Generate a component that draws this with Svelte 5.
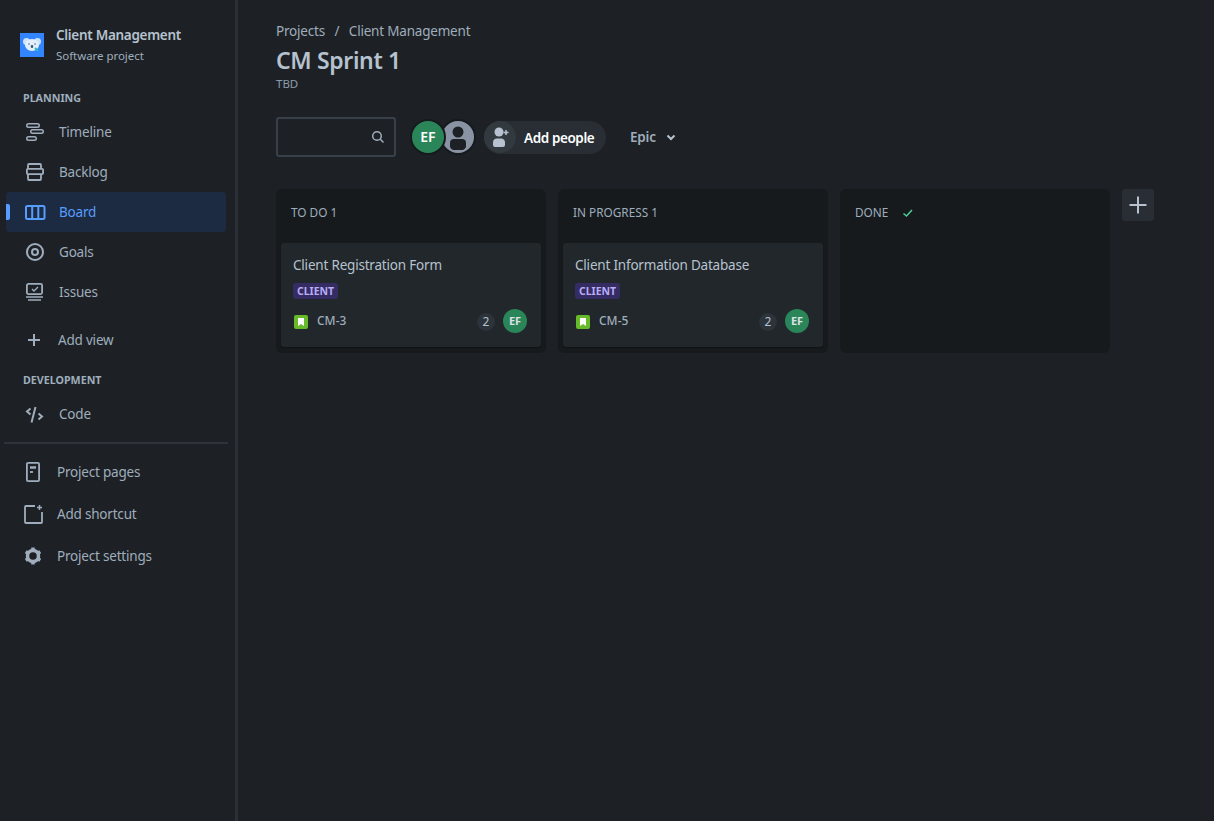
<script>
  const planning = [
    { id: "timeline", label: "Timeline" },
    { id: "backlog", label: "Backlog" },
    { id: "board", label: "Board", active: true },
    { id: "goals", label: "Goals" },
    { id: "issues", label: "Issues" },
  ];

  const columns = [
    { title: "TO DO 1", cards: [{ title: "Client Registration Form", key: "CM-3" }] },
    { title: "IN PROGRESS 1", cards: [{ title: "Client Information Database", key: "CM-5" }] },
    { title: "DONE", done: true, cards: [] },
  ];
</script>

{#snippet icon(id)}
  <svg class="icon" width="24" height="24" viewBox="0 0 24 24" fill="none" stroke="currentColor" stroke-width="2">
    {#if id === "timeline"}
      <rect x="3.750" y="3.750" width="12.500" height="3.500" rx="1.750" stroke-width="1.500" />
      <rect x="7.750" y="9.750" width="12.500" height="3.500" rx="1.750" stroke-width="1.500" />
      <rect x="3.750" y="16.750" width="9.500" height="3.500" rx="1.750" stroke-width="1.500" />
    {:else if id === "backlog"}
      <path d="M5 9V5a1 1 0 0 1 1-1h11a1 1 0 0 1 1 1v4" stroke-width="1.800" />
      <rect x="3.900" y="8.900" width="16.200" height="5.200" rx="1" stroke-width="1.800" />
      <path d="M5 14v5a1 1 0 0 0 1 1h11a1 1 0 0 0 1-1v-5" stroke-width="1.800" />
    {:else if id === "board"}
      <rect x="3" y="5.900" width="18.500" height="13.200" rx="1.500" />
      <path d="M9.200 5v14M15.300 5v14" />
    {:else if id === "goals"}
      <circle cx="12" cy="12" r="8" />
      <circle cx="12" cy="12" r="3" />
    {:else if id === "issues"}
      <rect x="3.900" y="3.900" width="15.200" height="10.200" rx="1.500" stroke-width="1.800" />
      <path d="M9 9l2 2 4-4" stroke-width="1.400" />
      <path d="M3 17h17M5 20h13" stroke-width="1.500" />
    {:else if id === "add"}
      <path d="M11 6v12M5 12h12" />
    {:else if id === "code"}
      <path d="M7.500 6.500L4 9.500l3.500 3M15.500 11.500l3.500 3-3.500 3M12.500 5l-4 15.500" />
    {:else if id === "pages"}
      <rect x="5.900" y="2.900" width="12.200" height="18.200" rx="1.200" stroke-width="1.800" />
      <path d="M9 7.500h6" stroke-width="2.500" />
      <path d="M9 12h3" stroke-width="1.800" />
    {:else if id === "shortcut"}
      <path d="M14 4H5a1 1 0 0 0-1 1v15a1 1 0 0 0 1 1h15a1 1 0 0 0 1-1V10" stroke-width="1.800" />
      <path d="M18.500 3v5M16 5.500h5" stroke-width="1.500" />
    {:else if id === "settings"}
      <circle cx="12" cy="12" r="5.500" stroke-width="3.500" />
      <path d="M12 3.500v3M12 17.500v3M4.700 7.800l2.600 1.500M16.700 14.700l2.600 1.500M4.700 16.200l2.600-1.500M16.700 9.300l2.600-1.500" stroke-width="3.500" />
    {/if}
  </svg>
{/snippet}

<div class="page">
  <aside class="sidebar">
    <header class="project">
      <svg class="logo" width="24" height="24" viewBox="0 0 24 24">
        <rect width="24" height="24" fill="#3385ff" />
        <circle cx="6.500" cy="8.500" r="3.500" fill="#cfe2fb" />
        <circle cx="17.500" cy="8.500" r="3.500" fill="#cfe2fb" />
        <ellipse cx="12" cy="12" rx="7" ry="6" fill="#e4effc" />
        <circle cx="9" cy="11" r="0.800" fill="#4a6a9a" />
        <circle cx="15" cy="11" r="0.800" fill="#4a6a9a" />
        <rect x="10.800" y="12" width="2.400" height="3" rx="1" fill="#3b5680" />
        <path d="M15 15l3 3" stroke="#2abbb0" stroke-width="2" />
      </svg>
      <div>
        <div class="project-name">Client Management</div>
        <div class="project-type">Software project</div>
      </div>
    </header>

    <h2 class="heading">PLANNING</h2>
    {#each planning as item}
      <div class="nav-item" class:active={item.active}>
        {@render icon(item.id)}
        <span>{item.label}</span>
      </div>
    {/each}
    <div class="nav-item add-view">
      {@render icon("add")}
      <span>Add view</span>
    </div>

    <h2 class="heading dev">DEVELOPMENT</h2>
    <div class="nav-item">
      {@render icon("code")}
      <span>Code</span>
    </div>

    <hr />

    <div class="bottom-item">{@render icon("pages")}<span>Project pages</span></div>
    <div class="bottom-item">{@render icon("shortcut")}<span>Add shortcut</span></div>
    <div class="bottom-item">{@render icon("settings")}<span>Project settings</span></div>
  </aside>

  <main class="main">
    <nav class="crumbs">
      <span>Projects</span><span>/</span><span>Client Management</span>
    </nav>
    <h1>CM Sprint 1</h1>
    <div class="sub">TBD</div>

    <div class="toolbar">
      <div class="search">
        <svg width="16" height="16" viewBox="0 0 16 16" fill="none" stroke="#9fadbc" stroke-width="1.500">
          <circle cx="7" cy="7" r="4.300" />
          <path d="M10.300 10.300l3.200 3.200" />
        </svg>
      </div>
      <div class="people">
        <span class="avatar ef">EF</span>
        <span class="avatar ghost">
          <svg width="32" height="32" viewBox="0 0 32 32">
            <circle cx="16" cy="16" r="16" fill="#8993a4" />
            <circle cx="16" cy="11" r="5.500" fill="#1d2125" />
            <path d="M8 22a4 4 0 0 1 4-4h8a4 4 0 0 1 4 4v4a6 6 0 0 1-3 3h-10a6 6 0 0 1-3-3z" fill="#1d2125" />
          </svg>
        </span>
      </div>
      <button class="add-people">
        <span class="add-icon">
          <svg width="32" height="32" viewBox="0 0 32 32" fill="#b6c2cf">
            <circle cx="15" cy="11" r="4.500" />
            <path d="M9 21a4 4 0 0 1 4-3.500h4a4 4 0 0 1 4 3.500v3a2 2 0 0 1-2 2h-8a2 2 0 0 1-2-2z" />
            <path d="M22 9v5M19.500 11.500h5" stroke="#b6c2cf" stroke-width="1.500" />
          </svg>
        </span>
        <span class="add-label">Add people</span>
      </button>
      <button class="epic">
        <span>Epic</span>
        <svg width="16" height="16" viewBox="0 0 16 16" fill="none" stroke="#b6c2cf" stroke-width="2">
          <path d="M4.500 6.500L8 10l3.500-3.500" />
        </svg>
      </button>
    </div>

    <div class="board">
      {#each columns as col}
        <section class="column">
          <div class="col-head">
            <span>{col.title}</span>
            {#if col.done}
              <svg class="check" width="16" height="16" viewBox="0 0 16 16" fill="none" stroke="#4bce97" stroke-width="1.500">
                <path d="M3.500 8.500L6.500 11l5.500-6" />
              </svg>
            {/if}
          </div>
          {#each col.cards as card}
            <article class="card">
              <div class="card-title">{card.title}</div>
              <span class="lozenge">CLIENT</span>
              <div class="card-foot">
                <svg class="story" width="14" height="14" viewBox="0 0 14 14">
                  <rect width="14" height="14" rx="2" fill="#67bb2a" />
                  <path d="M4 3h6v8L7 9l-3 2z" fill="#fff" />
                </svg>
                <span class="key">{card.key}</span>
                <span class="count">2</span>
                <span class="card-avatar">EF</span>
              </div>
            </article>
          {/each}
        </section>
      {/each}
      <button class="add-col" aria-label="Add column">
        <svg width="20" height="20" viewBox="0 0 20 20" stroke="#b6c2cf" stroke-width="2">
          <path d="M10 1.500v17M1.500 10h17" />
        </svg>
      </button>
    </div>
  </main>
</div>

<style>
  :global(body) {
    background: #1d2125;
    font-family: "Noto Sans", "Open Sans", sans-serif;
    color: #b6c2cf;
    font-size: 13.5px;
    letter-spacing: -0.2px;
  }

  .page {
    display: flex;
    min-height: 821px;
  }

  .sidebar {
    width: 235px;
    border-right: 3px solid #2a3036;
    box-sizing: content-box;
    flex-shrink: 0;
    color: #9fadbc;
  }

  .project {
    display: flex;
    align-items: center;
    gap: 12px;
    padding: 25px 0 0 20px;
    height: 39px;
  }

  .logo {
    flex-shrink: 0;
  }

  .project-name {
    font-weight: 600;
    letter-spacing: -0.3px;
    color: #b6c2cf;
    line-height: 20px;
  }

  .project-type {
    font-size: 11.5px;
    letter-spacing: -0.05px;
    line-height: 16px;
    margin-top: 3px;
    color: #9fadbc;
  }

  .heading {
    font-size: 10.700px;
    font-weight: 700;
    letter-spacing: 0;
    line-height: 16px;
    margin: 0;
    padding: 26px 0 0 23px;
    height: 48px;
    box-sizing: border-box;
    color: #9fadbc;
  }

  .heading.dev {
    padding-top: 12px;
    height: 34px;
  }

  .nav-item {
    display: flex;
    align-items: center;
    gap: 12px;
    height: 40px;
    margin: 0 9px 0 6px;
    padding-left: 17px;
    position: relative;
    border-radius: 4px;
    width: 203px;
  }

  .nav-item.active {
    background: #1c2b41;
    color: #579dff;
  }

  .nav-item.active::before {
    content: "";
    position: absolute;
    left: 0;
    top: 12px;
    width: 4px;
    height: 16px;
    background: #579dff;
    border-radius: 0 2px 2px 0;
  }

  .add-view {
    margin-top: 8px;
    gap: 11px;
  }

  .icon {
    flex-shrink: 0;
  }

  hr {
    border: 0;
    height: 2px;
    background: #2c333a;
    margin: 8px 7px 7px 4px;
  }

  .bottom-item {
    display: flex;
    align-items: center;
    gap: 12px;
    height: 42px;
    padding-left: 21px;
  }

  .main {
    flex: 1;
    padding: 21px 0 0 38px;
  }

  .crumbs {
    display: flex;
    gap: 9.500px;
    line-height: 20px;
    color: #9fadbc;
  }

  h1 {
    font-size: 23px;
    font-weight: 600;
    letter-spacing: -0.35px;
    line-height: 32px;
    margin: 3px 0 0;
    color: #b6c2cf;
  }

  .sub {
    font-size: 11.5px;
    letter-spacing: 0;
    line-height: 15px;
    color: #8c9bab;
  }

  .toolbar {
    display: flex;
    align-items: center;
    margin-top: 26px;
    height: 40px;
  }

  .search {
    width: 120px;
    height: 40px;
    box-sizing: border-box;
    border: 2px solid #38414a;
    border-radius: 3px;
    display: flex;
    align-items: center;
    justify-content: flex-end;
    padding-right: 8px;
  }

  .people {
    display: flex;
    margin-left: 14px;
  }

  .avatar {
    width: 32px;
    height: 32px;
    border-radius: 50%;
    border: 2px solid #161a1d;
    display: block;
  }

  .avatar.ef {
    background: #2a8659;
    color: #fff;
    font-size: 14px;
    font-weight: 600;
    letter-spacing: 0;
    line-height: 32px;
    text-align: center;
    position: relative;
    z-index: 1;
  }

  .avatar.ghost {
    margin-left: -6px;
  }

  .add-people {
    display: flex;
    align-items: center;
    gap: 8px;
    height: 33px;
    width: 122px;
    margin-left: 8px;
    padding: 0;
    border: 0;
    border-radius: 17px;
    background: #282e33;
    color: #fff;
    font: 600 13.500px "Noto Sans", sans-serif;
    letter-spacing: -0.4px;
  }

  .add-label {
    padding-top: 2px;
  }

  .add-icon {
    width: 32px;
    height: 32px;
    border-radius: 50%;
    background: #32393f;
    display: block;
  }

  .epic {
    display: flex;
    align-items: center;
    gap: 7px;
    margin-left: 24px;
    padding: 0;
    border: 0;
    background: none;
    color: #9fadbc;
    font: 600 13.500px "Noto Sans", sans-serif;
    letter-spacing: -0.2px;
  }

  .board {
    display: flex;
    align-items: flex-start;
    gap: 12px;
    margin-top: 32px;
  }

  .column {
    width: 270px;
    height: 164px;
    background: #161a1d;
    border-radius: 6px;
    padding: 0 5px;
    box-sizing: border-box;
  }

  .col-head {
    display: flex;
    align-items: flex-start;
    gap: 12px;
    height: 54px;
    padding: 15px 0 0 10px;
    box-sizing: border-box;
    font-size: 11.800px;
    line-height: 16px;
    letter-spacing: 0;
    color: #9fadbc;
  }

  .check {
    margin-top: 1px;
  }

  .card {
    background: #22272b;
    border-radius: 3px;
    padding: 12px;
    height: 104px;
    box-sizing: border-box;
    box-shadow: 0 1px 1px #0000004d;
  }

  .card-title {
    line-height: 20px;
    color: #b6c2cf;
  }

  .lozenge {
    display: block;
    width: fit-content;
    margin-top: 8px;
    padding: 0 4px;
    height: 16px;
    line-height: 16px;
    font-size: 10.500px;
    letter-spacing: 0;
    font-weight: 700;
    color: #b8acf6;
    background: #352c63;
    border-radius: 3px;
  }

  .card-foot {
    display: flex;
    align-items: center;
    margin-top: 10px;
    height: 24px;
    padding-right: 2px;
  }

  .story {
    margin: 1px 9px 0 1px;
  }

  .key {
    font-size: 12px;
    font-weight: 500;
    letter-spacing: 0;
    color: #9fadbc;
    flex: 1;
    margin-top: -1px;
  }

  .count {
    width: 18px;
    height: 18px;
    border-radius: 50%;
    background: #2c333a;
    font-size: 12px;
    letter-spacing: 0;
    line-height: 18px;
    text-align: center;
    margin: 2px 8px 0 0;
  }

  .card-avatar {
    width: 24px;
    height: 24px;
    border-radius: 50%;
    background: #2a8659;
    color: #dfe1e6;
    font-size: 11px;
    font-weight: 700;
    letter-spacing: 0;
    line-height: 24px;
    text-align: center;
  }

  .add-col {
    width: 32px;
    height: 32px;
    border: 0;
    padding: 6px;
    background: #282e33;
    border-radius: 3px;
  }
</style>
